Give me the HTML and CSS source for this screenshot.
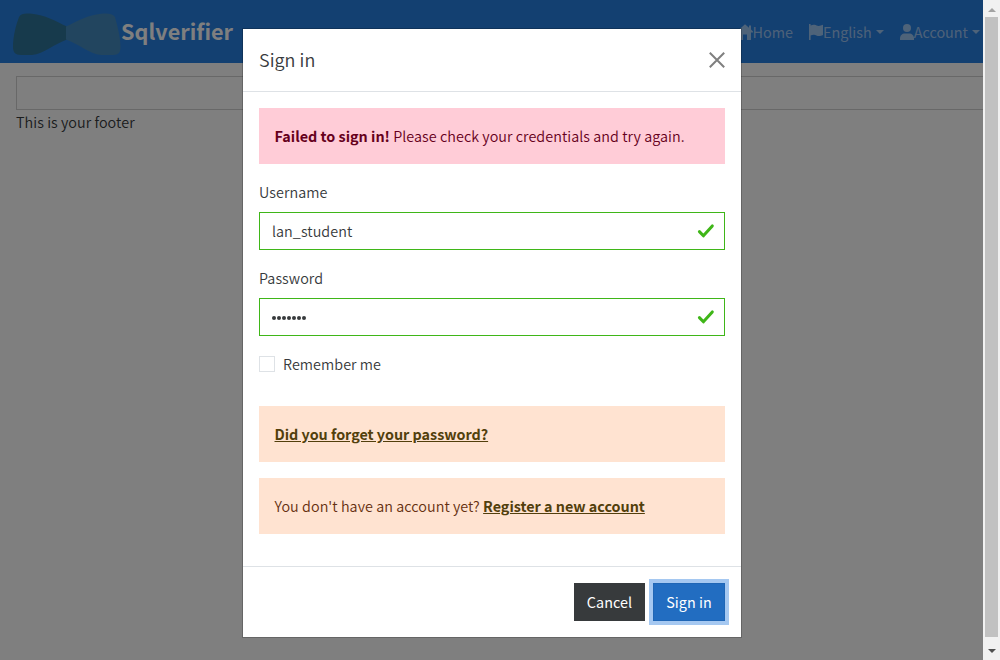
FILE: index.html
```html
<!DOCTYPE html>
<html lang="en">
<head>
<meta charset="utf-8">
<title>Sqlverifier</title>
<link rel="stylesheet" href="styles.css">
</head>
<body>
<div class="window">
  <div class="page">
    <nav class="navbar">
      <a class="brand">
        <svg class="logo" width="108" height="43" viewBox="0 0 108 43">
          <path fill="#2f7499" d="M54 13.500C42 8 32 2 19 .8 13 .4 8 0 6 4 3 12 0 23 0 34 0 39 2 42 8 42H19C31 41 41 31 54 26.500Z"/>
          <path fill="#448abe" d="M53 13.500C65 8 75 2 88 .8 94 .4 99 0 102 4 104 12 107.500 23 107.500 34 107.500 39 106 42 100 42H88C76 41 66 31 53 26.500Z"/>
        </svg>
        <span class="brand-name">Sqlverifier</span>
      </a>
      <ul class="menu">
        <li class="home"><svg width="16" height="16" viewBox="0 0 16 16"><path d="M8 .2 0 7.500V8.500H2V16H6V10.500H10V16H14V8.500H16V7.500L14 5.600V1.500H12V3.800Z"/></svg><span>Home</span></li>
        <li class="lang"><svg width="14" height="16" viewBox="0 0 14 16"><path d="M0 0H1.600V1.400C5 0 6.500 1 8.500 1.700 10 2.200 11.800 1.700 14 .8V11C10 13 8 11.700 6 11 4.500 10.600 3 10.900 1.600 11.400V16H0Z"/></svg><span>English</span><i class="caret"></i></li>
        <li class="account"><svg width="14" height="16" viewBox="0 0 14 16"><circle cx="7" cy="4" r="4"/><path d="M0 16V14.500C0 11.500 2 9.500 5 9.500H9C12 9.500 14 11.500 14 14.500V16Z"/></svg><span>Account</span><i class="caret"></i></li>
      </ul>
    </nav>
    <main class="card"></main>
    <footer class="footer">This is your footer</footer>
  </div>
  <div class="backdrop">
    <div class="modal">
      <header class="modal-header">
        <h4>Sign in</h4>
        <svg class="close" width="16" height="16" viewBox="0 0 16 16"><path d="M.8.8 15.200 15.200M15.200.8.8 15.200"/></svg>
      </header>
      <form class="modal-body">
        <div class="alert danger"><strong>Failed to sign in!</strong> <span>Please check your credentials and try again.</span></div>
        <div class="field">
          <label>Username</label>
          <div class="input"><span>lan_student</span><svg class="tick" width="18" height="16" viewBox="0 0 18 16"><path d="M2.400 8.600 6.400 12.800 15.300 2.900"/></svg></div>
        </div>
        <div class="field">
          <label>Password</label>
          <div class="input"><span class="dots"><i></i><i></i><i></i><i></i><i></i><i></i><i></i></span><svg class="tick" width="18" height="16" viewBox="0 0 18 16"><path d="M2.400 8.600 6.400 12.800 15.300 2.900"/></svg></div>
        </div>
        <div class="remember"><span class="checkbox"></span><span>Remember me</span></div>
        <div class="alert warning"><a>Did you forget your password?</a></div>
        <div class="alert warning"><span>You don't have an account yet?</span> <a>Register a new account</a></div>
      </form>
      <footer class="modal-footer">
        <span class="btn cancel">Cancel</span>
        <span class="btn submit">Sign in</span>
      </footer>
    </div>
  </div>
  <div class="scrollbar"><i class="arrow up"></i><i class="thumb"></i><i class="arrow down"></i></div>
</div>
</body>
</html>
```
FILE: styles.css
```css
* { box-sizing: border-box; }
body {
  margin: 0;
  font: 350 14.360px/24px "Noto Sans CJK SC", sans-serif;
  letter-spacing: .05px;
  color: #373a3c;
  background: #fff;
}
.window { position: relative; display: flex; width: 1000px; height: 660px; overflow: hidden; }
.page { width: 983px; overflow: hidden; }
.navbar { display: flex; justify-content: space-between; height: 63px; padding: 0 3px 0 13px; background: #2780e3; }
.brand { display: flex; padding-top: 13px; color: #fff; }
.brand-name { font-size: 21.600px; font-weight: 700; line-height: 36px; }
.menu { display: flex; margin: 0; padding: 20px 0 0; list-style: none; gap: 16px; color: rgba(255, 255, 255, .55); font-weight: 400; letter-spacing: 0; }
.menu li { display: flex; align-items: center; height: 24px; }
.menu svg { fill: currentColor; flex: none; }
.caret { margin-left: 4px; border: 4px solid transparent; border-top-color: currentColor; border-bottom: 0; }
.card { height: 34px; width: 983px; margin: 13px 0 0 16px; border: 1px solid rgba(0, 0, 0, .18); }
.footer { padding: 0 16px; }
.backdrop { position: absolute; inset: 0 17px 0 0; background: rgba(0, 0, 0, .5); }
.modal { width: 500px; margin: 28px 0 0 242px; background: #fff; background-clip: padding-box; border: 1px solid rgba(0, 0, 0, .2); }
.modal-header { display: flex; align-items: center; justify-content: space-between; height: 63px; padding: 0 16px; border-bottom: 1px solid #dee2e6; }
h4 { margin: 0; padding-bottom: 2px; font-size: 17.950px; font-weight: 350; }
.close { fill: none; stroke: #7f7f7f; stroke-width: 2; }
.modal-body { padding: 16px; }
.alert { height: 56px; padding: 16px 15.500px; margin-bottom: 16px; white-space: nowrap; }
.danger { background: #ffccd7; color: #66001c; }
.danger strong { letter-spacing: 0; }
.warning { background: #ffe3d1; color: #663010; }
.warning a { color: #523f0c; font-weight: 700; letter-spacing: -.02px; text-decoration: underline; }
.field { margin-bottom: 16px; }
label { display: block; margin-bottom: 8px; }
.input { display: flex; align-items: center; justify-content: space-between; height: 38px; padding: 0 9px 0 12px; border: 1px solid #3fb618; }
.tick { fill: none; stroke: #3fb618; stroke-width: 3; stroke-linecap: round; stroke-linejoin: round; }
.dots { display: flex; gap: 1px; padding-top: 2px; }
.dots i { width: 4px; height: 4px; border-radius: 50%; background: #373a3c; }
.remember { display: flex; align-items: center; gap: 8px; margin-bottom: 30px; }
.checkbox { width: 16px; height: 16px; border: 1px solid #dee2e6; }
.modal-footer { display: flex; justify-content: flex-end; gap: 8px; height: 71px; padding: 16px; border-top: 1px solid #dee2e6; }
.btn { height: 38px; line-height: 38px; text-align: center; font-weight: 400; color: #fff; }
.cancel { width: 71px; background: #373a3c; }
.submit { width: 72px; background: #226dc1; box-shadow: 0 0 0 4px #a5c8f1; border: 1px solid #1f66b6; line-height: 36px; }
.scrollbar { width: 17px; height: 660px; padding: 9px 2px; background: #f1f1f1; display: flex; flex-direction: column; align-items: center; }
.thumb { flex: none; width: 13px; height: 620px; margin: 5px 0 12px; background: #c1c1c1; }
.arrow { border: 4px solid transparent; flex: none; height: 4px; }
.up { border-top: 0; border-bottom-color: #a3a3a3; margin-top: -1px; }
.down { border-bottom: 0; border-top-color: #505050; }
```
